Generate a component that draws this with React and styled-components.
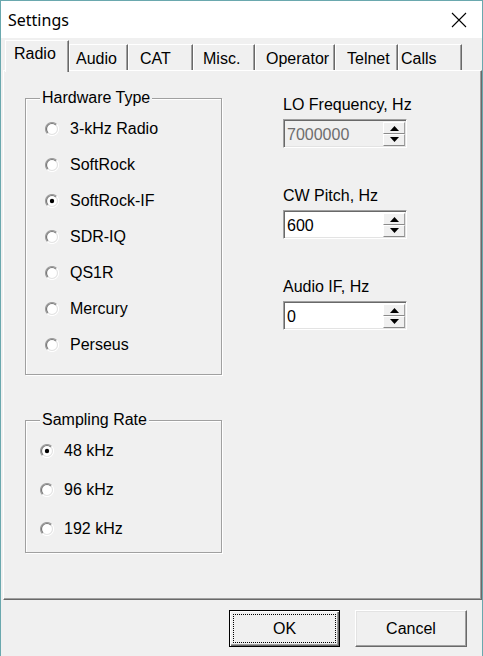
import React from "react";
import styled, { createGlobalStyle, css } from "styled-components";

const GlobalStyle = createGlobalStyle`
  html, body {
    margin: 0;
    padding: 0;
    background: #f0f0f0;
  }
  * {
    box-sizing: border-box;
  }
`;

const Window = styled.div`
  width: 483px;
  height: 656px;
  border: 1px solid #6aa8ae;
  border-bottom: none;
  background: #f0f0f0;
  display: flex;
  flex-direction: column;
  font-family: "Liberation Sans", Arial, sans-serif;
  font-size: 16px;
  color: #000;
  overflow: hidden;
`;

const TitleBar = styled.div`
  height: 37px;
  flex: none;
  background: #fff;
  display: flex;
  align-items: center;
  justify-content: space-between;
  padding: 0 15px 0 7px;
`;

const Title = styled.span`
  font-family: "Noto Sans", "Liberation Sans", sans-serif;
  font-size: 16px;
  line-height: 20px;
  margin-top: 1px;
`;

const CloseButton = styled.div`
  width: 17px;
  height: 17px;
  display: flex;
  align-items: center;
  justify-content: center;
`;

const TabStrip = styled.div`
  height: 32px;
  flex: none;
  display: flex;
  align-items: flex-end;
  padding: 2px 0 0 4px;
  position: relative;
  z-index: 1;
`;

const Tab = styled.div`
  width: ${(p) => p.$w}px;
  height: 26px;
  padding-left: ${(p) => p.$pad}px;
  padding-top: 5px;
  line-height: 18px;
  border-top: 1px solid #fff;
  border-left: 1px solid #fff;
  border-right: 1px solid #696969;
  box-shadow: inset -1px 0 0 #a0a0a0;
  background: #f0f0f0;
  white-space: nowrap;
  ${(p) =>
    p.$active &&
    css`
      height: 32px;
      margin-bottom: -2px;
      padding-top: 4px;
    `}
`;

const Panel = styled.div`
  height: 530px;
  flex: none;
  margin-left: 2px;
  border-top: 1px solid #fff;
  border-left: 1px solid #fff;
  border-right: 1px solid #696969;
  border-bottom: 1px solid #696969;
  box-shadow: inset -1px -1px 0 #a0a0a0;
  display: flex;
  gap: 61px;
  padding: 18px 0 0 21px;
`;

const LeftColumn = styled.div`
  width: 197px;
  display: flex;
  flex-direction: column;
`;

const GroupBox = styled.fieldset`
  margin: ${(p) => p.$mt || 0}px 0 0 0;
  padding: 0;
  min-inline-size: 0;
  border: 1px solid #a0a0a0;
  box-shadow: inset 1px 1px 0 #fff, 1px 1px 0 #fff;
`;

const Legend = styled.legend`
  margin-left: 14px;
  padding: 0 2px;
  line-height: 18px;
  background: #f0f0f0;
`;

const GroupBody = styled.div`
  padding: ${(p) => p.$pt}px 0 ${(p) => p.$pb}px ${(p) => p.$pl}px;
  display: flex;
  flex-direction: column;
`;

const RadioRow = styled.div`
  height: ${(p) => p.$h}px;
  display: flex;
  align-items: center;
  gap: ${(p) => p.$gap}px;
  line-height: 18px;
`;

const RightColumn = styled.div`
  width: 124px;
  padding-top: 7px;
  display: flex;
  flex-direction: column;
  gap: 39px;
`;

const Field = styled.div`
  display: flex;
  flex-direction: column;
  gap: 5px;
`;

const FieldLabel = styled.div`
  line-height: 18px;
  white-space: nowrap;
`;

const SpinBox = styled.div`
  height: 29px;
  display: flex;
  border: 1px solid;
  border-color: #a0a0a0 #fff #fff #a0a0a0;
  box-shadow: inset 1px 1px 0 #696969, inset -1px -1px 0 #e3e3e3;
  background: ${(p) => (p.$disabled ? "#f0f0f0" : "#fff")};
  padding: 2px 1px 1px 2px;
`;

const SpinValue = styled.div`
  flex: 1;
  padding-left: 1px;
  line-height: 25px;
  color: ${(p) => (p.$disabled ? "#6d6d6d" : "#000")};
`;

const SpinButtons = styled.div`
  width: 22px;
  display: flex;
  flex-direction: column;
  background: #f0f0f0;
`;

const SpinHalf = styled.div`
  flex: 1;
  display: flex;
  align-items: ${(p) => (p.$up ? "flex-end" : "flex-start")};
  justify-content: center;
  padding: ${(p) => (p.$up ? "0 0 2px" : "2px 0 0")};
  border-top: 1px solid #fff;
  border-left: 1px solid #fff;
  border-bottom: 1px solid #8a8a8a;
  border-right: 1px solid #a0a0a0;
`;

const ButtonBar = styled.div`
  flex: 1;
  display: flex;
  justify-content: flex-end;
  align-items: flex-start;
  gap: 15px;
  padding: 10px 15px 0 0;
`;

const DialogButton = styled.div`
  width: ${(p) => p.$w}px;
  height: 37px;
  display: flex;
  padding: 3px;
  background: #f0f0f0;
  border: 1px solid;
  ${(p) =>
    p.$default
      ? css`
          border-color: #000;
          box-shadow: inset 1px 1px 0 #fff, inset -1px -1px 0 #696969,
            inset -2px -2px 0 #a0a0a0;
        `
      : css`
          border-color: #fff #696969 #696969 #fff;
          box-shadow: inset -1px -1px 0 #a0a0a0, inset 1px 1px 0 #e3e3e3;
        `}
`;

const ButtonFace = styled.div`
  flex: 1;
  display: flex;
  align-items: center;
  justify-content: center;
  line-height: 18px;
  border: 1px dotted ${(p) => (p.$focused ? "#000" : "transparent")};
`;

const RadioMark = ({ checked }) => (
  <svg width="14" height="14" viewBox="0 0 14 14">
    <circle cx="7" cy="7" r="6" fill="#fff" />
    <path d="M2.4 11.6 A6.5 6.5 0 0 1 11.6 2.4" fill="none" stroke="#a0a0a0" strokeWidth="1.2" />
    <path d="M3.1 10.9 A5.5 5.5 0 0 1 10.9 3.1" fill="none" stroke="#787878" strokeWidth="1.2" />
    <path d="M11.6 2.4 A6.5 6.5 0 0 1 2.4 11.6" fill="none" stroke="#fff" strokeWidth="1.2" />
    <path d="M10.9 3.1 A5.5 5.5 0 0 1 3.1 10.9" fill="none" stroke="#e3e3e3" strokeWidth="1.2" />
    {checked && <circle cx="7" cy="7" r="2.2" fill="#000" />}
  </svg>
);

const Arrow = ({ up }) => (
  <svg width="9" height="5" viewBox="0 0 9 5">
    {up ? <polygon points="0,5 9,5 4.5,0" fill="#000" /> : <polygon points="0,0 9,0 4.5,5" fill="#000" />}
  </svg>
);

const tabs = [
  { label: "Radio", w: 64, pad: 8, active: true },
  { label: "Audio", w: 59, pad: 6 },
  { label: "CAT", w: 65, pad: 11 },
  { label: "Misc.", w: 62, pad: 9 },
  { label: "Operator", w: 80, pad: 10 },
  { label: "Telnet", w: 63, pad: 11 },
  { label: "Calls", w: 64, pad: 2 },
];

const hardware = ["3-kHz Radio", "SoftRock", "SoftRock-IF", "SDR-IQ", "QS1R", "Mercury", "Perseus"];
const rates = ["48 kHz", "96 kHz", "192 kHz"];

const fields = [
  { label: "LO Frequency, Hz", value: "7000000", disabled: true },
  { label: "CW Pitch, Hz", value: "600" },
  { label: "Audio IF, Hz", value: "0" },
];

export default function App() {
  return (
    <>
      <GlobalStyle />
      <Window>
        <TitleBar>
          <Title>Settings</Title>
          <CloseButton>
            <svg width="16" height="16" viewBox="0 0 16 16">
              <path d="M1 1 L15 15 M15 1 L1 15" stroke="#000" strokeWidth="1.1" />
            </svg>
          </CloseButton>
        </TitleBar>
        <TabStrip>
          {tabs.map((t) => (
            <Tab key={t.label} $w={t.w} $pad={t.pad} $active={t.active}>
              {t.label}
            </Tab>
          ))}
        </TabStrip>
        <Panel>
          <LeftColumn>
            <GroupBox>
              <Legend>Hardware Type</Legend>
              <GroupBody $pt={4} $pb={11} $pl={19}>
                {hardware.map((h) => (
                  <RadioRow key={h} $h={36} $gap={11}>
                    <RadioMark checked={h === "SoftRock-IF"} />
                    {h}
                  </RadioRow>
                ))}
              </GroupBody>
            </GroupBox>
            <GroupBox $mt={36}>
              <Legend>Sampling Rate</Legend>
              <GroupBody $pt={2} $pb={4} $pl={14}>
                {rates.map((r) => (
                  <RadioRow key={r} $h={39} $gap={10}>
                    <RadioMark checked={r === "48 kHz"} />
                    {r}
                  </RadioRow>
                ))}
              </GroupBody>
            </GroupBox>
          </LeftColumn>
          <RightColumn>
            {fields.map((f) => (
              <Field key={f.label}>
                <FieldLabel>{f.label}</FieldLabel>
                <SpinBox $disabled={f.disabled}>
                  <SpinValue $disabled={f.disabled}>{f.value}</SpinValue>
                  <SpinButtons>
                    <SpinHalf $up>
                      <Arrow up />
                    </SpinHalf>
                    <SpinHalf>
                      <Arrow />
                    </SpinHalf>
                  </SpinButtons>
                </SpinBox>
              </Field>
            ))}
          </RightColumn>
        </Panel>
        <ButtonBar>
          <DialogButton $w={111} $default>
            <ButtonFace $focused>OK</ButtonFace>
          </DialogButton>
          <DialogButton $w={112}>
            <ButtonFace>Cancel</ButtonFace>
          </DialogButton>
        </ButtonBar>
      </Window>
    </>
  );
}
